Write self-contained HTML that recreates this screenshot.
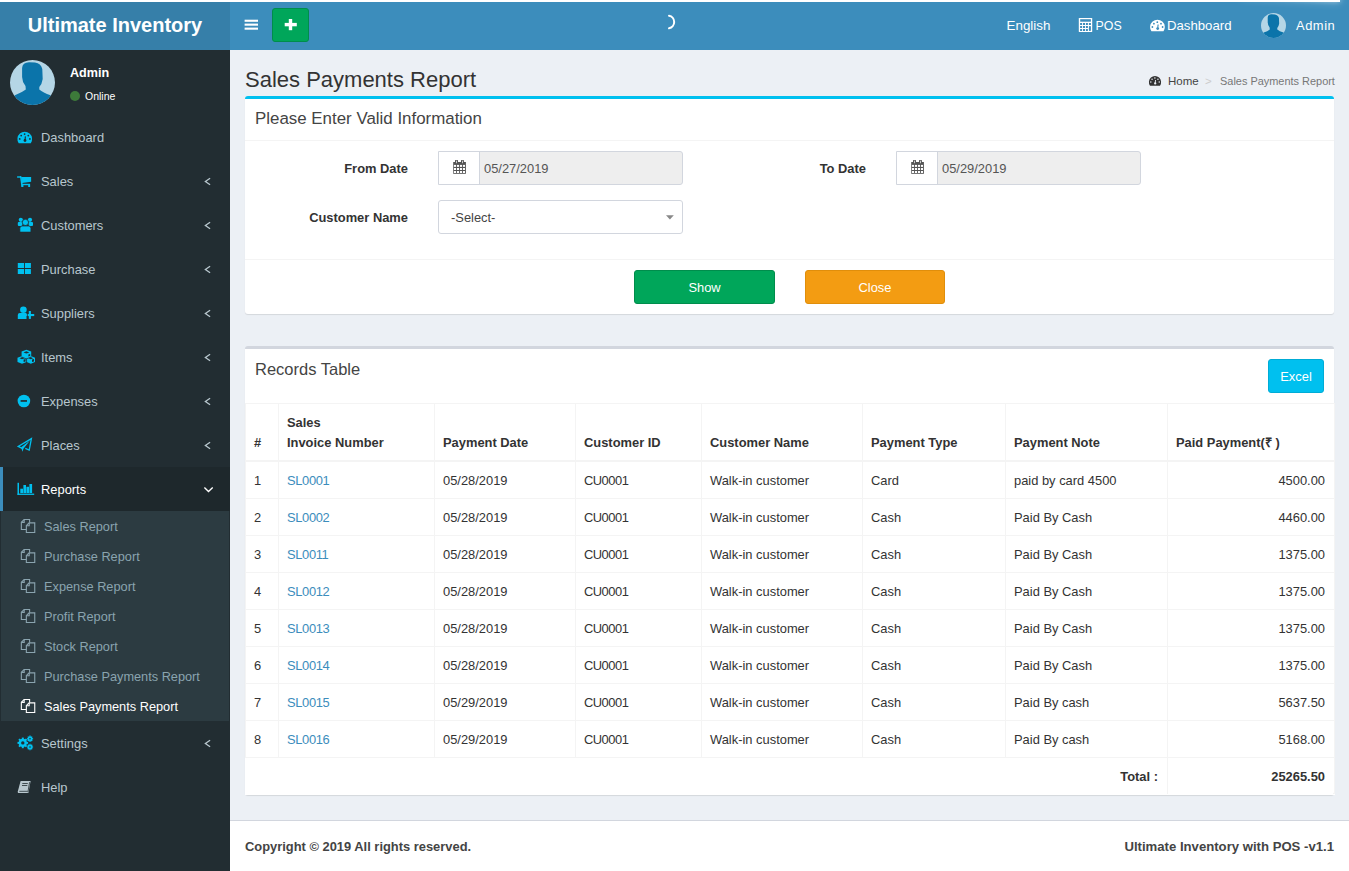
<!DOCTYPE html>
<html>
<head>
<meta charset="utf-8">
<style>
*{box-sizing:border-box;margin:0;padding:0}
html,body{width:1349px;height:871px;overflow:hidden}
body{font-family:"Liberation Sans",sans-serif;font-size:12.9px;color:#333;background:#ecf0f5;position:relative}
.abs{position:absolute}
.nowrap{white-space:nowrap}
/* header */
#logo{position:absolute;left:0;top:0;width:230px;height:50px;background:#367fa9;color:#fff;font-weight:bold;font-size:20px;line-height:50px;text-align:center}
#navbar{position:absolute;left:230px;top:0;width:1119px;height:50px;background:#3c8dbc}
#pace{position:absolute;left:0;top:0;width:1340px;height:2px;background:#fff;z-index:10}
.navtxt{position:absolute;color:#fff;font-size:12.9px;line-height:16px;top:18px;white-space:nowrap}
/* sidebar */
#sidebar{position:absolute;left:0;top:50px;width:230px;height:821px;background:#222d32}
.mi{position:absolute;left:0;width:230px;height:44px;color:#b8c7ce;font-size:12.9px}
.mi .t{position:absolute;left:41px;top:15px;line-height:16px;white-space:nowrap}
.mi svg.ic{position:absolute;left:17px;top:15px}
.mi .ang{position:absolute;left:203px;top:16px}
.si{position:absolute;left:1px;width:228px;height:30px;color:#8aa4af;font-size:12.75px}
.si .t{position:absolute;left:43px;top:8px;line-height:16px;white-space:nowrap}
.si svg{position:absolute;left:20px;top:8px}
/* content */
.box{position:absolute;background:#fff;border-radius:3px;box-shadow:0 1px 1px rgba(0,0,0,.1)}
.lbl{position:absolute;font-weight:bold;text-align:right;width:200px;line-height:16px;color:#333;white-space:nowrap}
.ig{position:absolute;height:34px;border:1px solid #d2d6de;border-radius:0 3px 3px 0;background:#eee}
.ig .addon{position:absolute;left:0;top:0;width:41px;height:32px;background:#fff;border-right:1px solid #d2d6de;border-radius:0}
.ig .val{position:absolute;left:45px;top:9px;line-height:16px;color:#555}
.btn{position:absolute;color:#fff;text-align:center;line-height:33.5px;border-radius:3px;font-size:12.9px}
table{border-collapse:collapse;position:absolute;table-layout:fixed}
td,th{border:1px solid #f4f4f4;padding:0 8px;vertical-align:middle;text-align:left;white-space:nowrap;line-height:20px}
th{font-weight:bold;padding:9px 8px 7px;line-height:20px;border-bottom:2px solid #f4f4f4}
td{padding:9px 8px 7px}
.r{text-align:right;padding-right:9px}
.b{font-weight:bold}
a{color:#3c8dbc;text-decoration:none;letter-spacing:-0.35px}
#footer{position:absolute;left:230px;top:820px;width:1119px;height:51px;background:#fff;border-top:1px solid #d2d6de;font-weight:bold;color:#444}
</style>
</head>
<body>
<div id="pace"><div style="position:absolute;right:0;top:0;width:100px;height:100%;box-shadow:0 0 10px #fff,0 0 5px #fff;transform:rotate(3deg) translate(0px,-4px)"></div></div>
<div id="logo">Ultimate Inventory</div>
<div id="navbar">
  <!-- hamburger -->
  <svg class="abs" style="left:14px;top:18px" width="15" height="14" viewBox="0 0 15 14"><rect x="0.6" y="1.7" width="13.4" height="2.1" fill="#fff"/><rect x="0.6" y="5.6" width="13.4" height="2.1" fill="#fff"/><rect x="0.6" y="9.6" width="13.4" height="2.1" fill="#fff"/></svg>
  <!-- green button -->
  <div class="abs" style="left:42px;top:8px;width:37px;height:34px;background:#00a65a;border:1px solid #008d4c;border-radius:3px"></div>
  <svg class="abs" style="left:54px;top:18px" width="14" height="14" viewBox="0 0 14 14"><rect x="4.8" y="1" width="3.4" height="11.2" fill="#fff"/><rect x="0.7" y="4.9" width="12.1" height="3.4" fill="#fff"/></svg>
  <!-- spinner -->
  <svg class="abs" style="left:431px;top:12px" width="20" height="20" viewBox="0 0 20 20"><path d="M8 3.8 A6.3 6.3 0 0 1 8 16.2" stroke="#fff" stroke-width="2" fill="none" stroke-linecap="round"/></svg>
  <div class="navtxt" style="left:776.5px;font-size:13.4px">English</div>
  <svg class="abs" style="left:848px;top:17px" width="15" height="16" viewBox="0 0 15 16"><rect x="0.8" y="0.9" width="13.4" height="14.2" rx="0.6" fill="#fff"/><g fill="#3c8dbc"><rect x="2.2" y="2.2" width="10.7" height="2.5"/><rect x="2.1" y="6" width="2" height="2"/><rect x="5" y="6" width="2" height="2"/><rect x="7.9" y="6" width="2" height="2"/><rect x="10.9" y="6" width="2" height="2"/><rect x="2.1" y="9" width="2" height="2"/><rect x="5" y="9" width="2" height="2"/><rect x="7.9" y="9" width="2" height="2"/><rect x="10.9" y="9" width="2" height="5" rx="0.8"/><rect x="2.1" y="12" width="2" height="2"/><rect x="5" y="12" width="2" height="2"/><rect x="7.9" y="12" width="2" height="2"/></g></svg>
  <div class="navtxt" style="left:865.5px;font-size:12.4px">POS</div>
  <svg class="abs" style="left:920px;top:19px" width="16" height="13" viewBox="0 0 16 13"><g transform="translate(0.1,0.9)"><path d="M1.32 11.4 A7.35 7.35 0 1 1 13.38 11.4 Z" fill="#fff"/><g fill="#3c8dbc"><circle cx="7.2" cy="2.3" r="0.9"/><circle cx="3.8" cy="3.8" r="0.9"/><circle cx="10.9" cy="3.8" r="0.9"/><circle cx="2.3" cy="7.1" r="0.9"/><circle cx="12.5" cy="7.1" r="0.9"/><circle cx="7.6" cy="8.7" r="1.4"/></g><path d="M7.6 8.7 L8 4.6" stroke="#3c8dbc" stroke-width="1.1"/></g></svg>
  <div class="navtxt" style="left:937px;font-size:13.2px">Dashboard</div>
  <svg class="abs" style="left:1031px;top:13px" width="25" height="25" viewBox="0 0 45 45"><defs><clipPath id="cp1"><circle cx="22.5" cy="22.5" r="22.5"/></clipPath></defs><circle cx="22.5" cy="22.5" r="22.5" fill="#b5d6e6"/><g clip-path="url(#cp1)" fill="#0b74aa"><path d="M12.1 8 Q12.5 2.5 19 2.3 L25 2.6 Q31 3.5 32.3 9 L32.7 19 Q32 24 29.3 27 L29.3 29.5 Q33 32.5 40.5 35.3 L45 45 L0 45 L4.9 35.3 Q12 32.5 15.8 29.5 L15.5 26 Q12.2 22 12.1 17 Z"/></g></svg>
  <div class="navtxt" style="left:1066px;letter-spacing:0.55px">Admin</div>
</div>

<div id="sidebar">
  <!-- user panel -->
  <svg class="abs" style="left:10px;top:10px" width="45" height="45" viewBox="0 0 45 45"><defs><clipPath id="cp2"><circle cx="22.5" cy="22.5" r="22.5"/></clipPath></defs><circle cx="22.5" cy="22.5" r="22.5" fill="#b5d6e6"/><g clip-path="url(#cp2)" fill="#0b74aa"><path d="M12.1 8 Q12.5 2.5 19 2.3 L25 2.6 Q31 3.5 32.3 9 L32.7 19 Q32 24 29.3 27 L29.3 29.5 Q33 32.5 40.5 35.3 L45 45 L0 45 L4.9 35.3 Q12 32.5 15.8 29.5 L15.5 26 Q12.2 22 12.1 17 Z"/></g></svg>
  <div class="abs nowrap" style="left:70px;top:15px;color:#fff;font-weight:bold;font-size:12.6px;line-height:16px">Admin</div>
  <div class="abs" style="left:70px;top:41px;width:10px;height:10px;border-radius:50%;background:#3d7a3a"></div>
  <div class="abs nowrap" style="left:85px;top:38px;color:#fff;font-size:10.5px;line-height:16px">Online</div>

  <div class="mi" style="top:65px"><div class="t">Dashboard</div></div>
  <div class="mi" style="top:109px"><div class="t">Sales</div></div>
  <div class="mi" style="top:153px"><div class="t">Customers</div></div>
  <div class="mi" style="top:197px"><div class="t">Purchase</div></div>
  <div class="mi" style="top:241px"><div class="t">Suppliers</div></div>
  <div class="mi" style="top:285px"><div class="t">Items</div></div>
  <div class="mi" style="top:329px"><div class="t">Expenses</div></div>
  <div class="mi" style="top:373px"><div class="t">Places</div></div>
  <div class="mi" style="top:417px;background:#1e282c;color:#fff"><div class="abs" style="left:0;top:0;width:3px;height:44px;background:#3c8dbc"></div><div class="t">Reports</div></div>
  <div class="abs" style="left:1px;top:461px;width:228px;height:210px;background:#2c3b41"></div>
  <div class="si" style="top:461px"><div class="t">Sales Report</div></div>
  <div class="si" style="top:491px"><div class="t">Purchase Report</div></div>
  <div class="si" style="top:521px"><div class="t">Expense Report</div></div>
  <div class="si" style="top:551px"><div class="t">Profit Report</div></div>
  <div class="si" style="top:581px"><div class="t">Stock Report</div></div>
  <div class="si" style="top:611px"><div class="t">Purchase Payments Report</div></div>
  <div class="si" style="top:641px;color:#fff"><div class="t">Sales Payments Report</div></div>
  <div class="mi" style="top:671px"><div class="t">Settings</div></div>
  <div class="mi" style="top:715px"><div class="t">Help</div></div>
</div>

<svg class="abs" style="left:0;top:0;z-index:5" width="230" height="871" viewBox="0 0 230 871">
  <!-- dashboard -->
  <path d="M18.7 143.2 A7.35 7.35 0 1 1 30.8 143.2 Z" fill="#00c0ef"/>
  <g fill="#222d32"><circle cx="24.6" cy="134.1" r="0.9"/><circle cx="21.2" cy="135.6" r="0.9"/><circle cx="28.3" cy="135.6" r="0.9"/><circle cx="19.7" cy="138.9" r="0.9"/><circle cx="29.9" cy="138.9" r="0.9"/><circle cx="25" cy="140.5" r="1.4"/></g>
  <path d="M25 140.5 L25.4 136.4" stroke="#222d32" stroke-width="1.1"/>
  <!-- cart -->
  <g fill="#00c0ef"><rect x="17.1" y="176.3" width="3.9" height="1.4"/><path d="M19.9 176.3 L21.4 176.3 L23.1 187 L21.5 187 Z"/><path d="M21.1 176.9 L31.1 176.9 L31.1 181.8 L22 182.9 Z"/><rect x="21.5" y="183.8" width="8.6" height="1.4"/><rect x="21.5" y="185" width="1.9" height="2"/><rect x="28.2" y="185" width="1.9" height="2"/></g>
  <!-- users -->
  <g fill="#00c0ef"><circle cx="20.8" cy="219.8" r="2.1"/><circle cx="30" cy="219.8" r="2.1"/><rect x="17.8" y="222.1" width="4.6" height="3.9" rx="1"/><rect x="28.6" y="222.1" width="4.4" height="3.9" rx="1"/></g>
  <g fill="#00c0ef" stroke="#222d32" stroke-width="0.7"><circle cx="25.4" cy="222.4" r="3.1"/><path d="M19.9 232.1 L19.9 228.2 Q19.9 226 22 226 L28.8 226 Q30.9 226 30.9 228.2 L30.9 232.1 Z"/></g>
  <!-- th-large -->
  <g fill="#00c0ef"><rect x="17.8" y="263" width="6.2" height="5"/><rect x="24.9" y="263" width="6" height="5"/><rect x="17.8" y="269" width="6.2" height="5"/><rect x="24.9" y="269" width="6" height="5"/></g>
  <!-- user-plus -->
  <g fill="#00c0ef"><circle cx="23.4" cy="309.7" r="3.3"/><path d="M17.8 318.9 L17.8 315.1 Q17.8 313.1 19.8 313.1 L26.5 313.1 L26.5 318.9 Z"/><rect x="28.8" y="311" width="2.1" height="7.9"/><rect x="25.6" y="314" width="8.6" height="2.1"/></g>
  <path d="M27.4 313 L27.4 317" stroke="#222d32" stroke-width="0.8"/>
  <!-- cubes -->
  <g fill="#00c0ef"><path d="M26.4 349.8 L31.2 351.6 L31.2 357 L26.4 358.8 L21.6 357 L21.6 351.6 Z"/><path d="M22 356 L26.6 357.8 L26.6 362 L22 363.8 L17.5 362 L17.5 357.8 Z"/><path d="M30.8 356 L35 357.8 L35 362 L30.8 363.8 L26.6 362 L26.6 357.8 Z"/></g>
  <g fill="#222d32"><path d="M26.4 351.3 L29.3 352.4 L26.4 353.4 L23.5 352.4 Z"/><path d="M22 357.3 L24.6 358.3 L22 359.2 L19.4 358.3 Z"/><path d="M30.8 357.3 L33.2 358.3 L30.8 359.2 L28.4 358.3 Z"/></g>
  <g stroke="#222d32" stroke-width="0.7" fill="none"><path d="M21.4 356.9 L26.4 358.9 L31.4 356.9"/><path d="M26.6 358.6 L26.6 364"/></g><g fill="#222d32"><path d="M23.6 359.6 L25.6 359 L25.6 361.4 L23.6 362 Z"/><path d="M32 359.6 L34 359 L34 361.4 L32 362 Z"/><path d="M28.4 354.5 L30.2 353.9 L30.2 355.8 L28.4 356.4 Z"/></g>
  <!-- minus-circle -->
  <circle cx="23.9" cy="401" r="6.3" fill="#00c0ef"/><rect x="20.6" y="400.1" width="6.4" height="1.7" fill="#222d32"/>
  <!-- paper-plane-o -->
  <path d="M22.2 448.4 L18.2 446.4 L31.4 438.6 L29.2 450 L25.3 448.4" stroke="#00c0ef" stroke-width="1.3" fill="none" stroke-linejoin="miter"/>
  <path d="M21.2 447.2 L30 440.5 L23.6 448.4 L22.4 451.8 Z" fill="#00c0ef"/>
  <!-- bar chart -->
  <g fill="#00c0ef"><rect x="17.5" y="482.8" width="1.5" height="12.1"/><rect x="17.5" y="493.6" width="16.7" height="1.3"/><rect x="20.3" y="488.7" width="2.7" height="4.3"/><rect x="23.4" y="485" width="2.6" height="8"/><rect x="26.4" y="486.8" width="2.6" height="6.2"/><rect x="29.4" y="484" width="2.7" height="9"/></g>
  <!-- cogs -->
  <g fill="#00c0ef">
    <circle cx="22.8" cy="742.9" r="4.2"/>
    <g stroke="#00c0ef" stroke-width="2"><path d="M22.8 737.6 L22.8 748.2"/><path d="M17.5 742.9 L28.1 742.9"/><path d="M19.05 739.15 L26.55 746.65"/><path d="M26.55 739.15 L19.05 746.65"/></g>
    <circle cx="30" cy="738.8" r="2.3"/><g stroke="#00c0ef" stroke-width="1.3"><path d="M30 735.6 L30 742"/><path d="M26.9 738.8 L33.1 738.8"/><path d="M27.8 736.6 L32.2 741"/><path d="M32.2 736.6 L27.8 741"/></g>
    <circle cx="30" cy="747" r="2.3"/><g stroke="#00c0ef" stroke-width="1.3"><path d="M30 743.8 L30 750.2"/><path d="M26.9 747 L33.1 747"/><path d="M27.8 744.8 L32.2 749.2"/><path d="M32.2 744.8 L27.8 749.2"/></g>
  </g>
  <g fill="#222d32"><circle cx="22.8" cy="742.9" r="1.7"/><circle cx="30" cy="738.8" r="0.8"/><circle cx="30" cy="747" r="0.8"/></g>
  <!-- book -->
  <path d="M20.6 781 L30.6 781 L28.4 792.9 L18.2 792.9 Q17.6 792.6 17.8 791.5 Z" fill="#b8c7ce"/>
  <g stroke="#222d32" stroke-width="0.8"><path d="M22.3 783.5 L27.8 783.5"/><path d="M22 785.5 L27.3 785.5"/><path d="M19.3 791.3 L27.6 791.3"/></g>
  <path d="M29.6 782.2 L27.9 792.2" stroke="#222d32" stroke-width="0.8"/>
  <!-- angles -->
  <path d="M210.1 178.3 L205.4 181.5 L210.1 184.7" stroke="#b8c7ce" stroke-width="1.3" fill="none"/><path d="M210.1 222.3 L205.4 225.5 L210.1 228.7" stroke="#b8c7ce" stroke-width="1.3" fill="none"/><path d="M210.1 266.3 L205.4 269.5 L210.1 272.7" stroke="#b8c7ce" stroke-width="1.3" fill="none"/><path d="M210.1 310.3 L205.4 313.5 L210.1 316.7" stroke="#b8c7ce" stroke-width="1.3" fill="none"/><path d="M210.1 354.3 L205.4 357.5 L210.1 360.7" stroke="#b8c7ce" stroke-width="1.3" fill="none"/><path d="M210.1 398.3 L205.4 401.5 L210.1 404.7" stroke="#b8c7ce" stroke-width="1.3" fill="none"/><path d="M210.1 442.3 L205.4 445.5 L210.1 448.7" stroke="#b8c7ce" stroke-width="1.3" fill="none"/><path d="M210.1 740.3 L205.4 743.5 L210.1 746.7" stroke="#b8c7ce" stroke-width="1.3" fill="none"/>
  <path d="M204.4 487.6 L208.5 491.5 L212.7 487.6" stroke="#fff" stroke-width="1.4" fill="none"/>
  <g stroke="#8aa4af" stroke-width="1.1" fill="none" transform="translate(20.8,519)">
    <path d="M5.3 10.5 L0.55 10.5 L0.55 3.3 L3.3 0.55 L8.8 0.55 L8.8 3.6"/><path d="M0.8 3.4 L3.4 3.4 L3.4 0.8"/>
    <path d="M5.55 6.6 L8.3 3.85 L13.95 3.85 L13.95 13.5 L5.55 13.5 Z"/><path d="M5.8 6.7 L8.4 6.7 L8.4 4.1"/>
  </g>
  <g stroke="#8aa4af" stroke-width="1.1" fill="none" transform="translate(20.8,549)">
    <path d="M5.3 10.5 L0.55 10.5 L0.55 3.3 L3.3 0.55 L8.8 0.55 L8.8 3.6"/><path d="M0.8 3.4 L3.4 3.4 L3.4 0.8"/>
    <path d="M5.55 6.6 L8.3 3.85 L13.95 3.85 L13.95 13.5 L5.55 13.5 Z"/><path d="M5.8 6.7 L8.4 6.7 L8.4 4.1"/>
  </g>
  <g stroke="#8aa4af" stroke-width="1.1" fill="none" transform="translate(20.8,579)">
    <path d="M5.3 10.5 L0.55 10.5 L0.55 3.3 L3.3 0.55 L8.8 0.55 L8.8 3.6"/><path d="M0.8 3.4 L3.4 3.4 L3.4 0.8"/>
    <path d="M5.55 6.6 L8.3 3.85 L13.95 3.85 L13.95 13.5 L5.55 13.5 Z"/><path d="M5.8 6.7 L8.4 6.7 L8.4 4.1"/>
  </g>
  <g stroke="#8aa4af" stroke-width="1.1" fill="none" transform="translate(20.8,609)">
    <path d="M5.3 10.5 L0.55 10.5 L0.55 3.3 L3.3 0.55 L8.8 0.55 L8.8 3.6"/><path d="M0.8 3.4 L3.4 3.4 L3.4 0.8"/>
    <path d="M5.55 6.6 L8.3 3.85 L13.95 3.85 L13.95 13.5 L5.55 13.5 Z"/><path d="M5.8 6.7 L8.4 6.7 L8.4 4.1"/>
  </g>
  <g stroke="#8aa4af" stroke-width="1.1" fill="none" transform="translate(20.8,639)">
    <path d="M5.3 10.5 L0.55 10.5 L0.55 3.3 L3.3 0.55 L8.8 0.55 L8.8 3.6"/><path d="M0.8 3.4 L3.4 3.4 L3.4 0.8"/>
    <path d="M5.55 6.6 L8.3 3.85 L13.95 3.85 L13.95 13.5 L5.55 13.5 Z"/><path d="M5.8 6.7 L8.4 6.7 L8.4 4.1"/>
  </g>
  <g stroke="#8aa4af" stroke-width="1.1" fill="none" transform="translate(20.8,669)">
    <path d="M5.3 10.5 L0.55 10.5 L0.55 3.3 L3.3 0.55 L8.8 0.55 L8.8 3.6"/><path d="M0.8 3.4 L3.4 3.4 L3.4 0.8"/>
    <path d="M5.55 6.6 L8.3 3.85 L13.95 3.85 L13.95 13.5 L5.55 13.5 Z"/><path d="M5.8 6.7 L8.4 6.7 L8.4 4.1"/>
  </g>
  <g stroke="#fff" stroke-width="1.1" fill="none" transform="translate(20.8,699)">
    <path d="M5.3 10.5 L0.55 10.5 L0.55 3.3 L3.3 0.55 L8.8 0.55 L8.8 3.6"/><path d="M0.8 3.4 L3.4 3.4 L3.4 0.8"/>
    <path d="M5.55 6.6 L8.3 3.85 L13.95 3.85 L13.95 13.5 L5.55 13.5 Z"/><path d="M5.8 6.7 L8.4 6.7 L8.4 4.1"/>
  </g>
</svg>
<!-- content header -->
<div class="abs nowrap" style="left:245px;top:67.5px;font-size:22px;line-height:24px;color:#333">Sales Payments Report</div>
<div class="abs nowrap" style="left:1168px;top:73px;font-size:11.5px;line-height:16px;color:#444">Home</div>
<div class="abs nowrap" style="left:1205px;top:73px;font-size:11.5px;line-height:16px;color:#ccc">&gt;</div>
<div class="abs nowrap" style="left:1220px;top:73px;font-size:10.95px;line-height:16px;color:#777">Sales Payments Report</div>

<!-- box 1 -->
<div class="box" style="left:245px;top:96px;width:1089px;height:218px;border-top:3px solid #00c0ef">
  <div class="abs nowrap" style="left:10px;top:10px;font-size:16.9px;line-height:20px;color:#444">Please Enter Valid Information</div>
  <div class="abs" style="left:0;top:41px;width:1089px;height:1px;background:#f4f4f4"></div>
  <div class="lbl" style="left:-37px;top:62px">From Date</div>
  <div class="ig" style="left:193px;top:52px;width:245px"><div class="addon"></div><div class="val">05/27/2019</div></div>
  <div class="lbl" style="left:421px;top:62px">To Date</div>
  <div class="ig" style="left:651px;top:52px;width:245px"><div class="addon"></div><div class="val">05/29/2019</div></div>
  <div class="lbl" style="left:-37px;top:111px">Customer Name</div>
  <div class="abs" style="left:193px;top:101px;width:245px;height:34px;border:1px solid #d2d6de;border-radius:3px;background:#fff"><div class="abs nowrap" style="left:12px;top:9px;line-height:16px;color:#444">-Select-</div></div>
  <div class="abs" style="left:0;top:160px;width:1089px;height:1px;background:#f4f4f4"></div>
  <div class="btn" style="left:389px;top:171px;width:141px;height:34px;background:#00a65a;border:1px solid #008d4c">Show</div>
  <div class="btn" style="left:560px;top:171px;width:140px;height:34px;background:#f39c12;border:1px solid #e08e0b">Close</div>
</div>

<!-- box 2 -->
<div class="box" style="left:245px;top:346px;width:1089px;height:449px;border-top:3px solid #d2d6de">
  <div class="abs nowrap" style="left:10px;top:9.5px;font-size:16.5px;line-height:20px;color:#444">Records Table</div>
  <div class="btn" style="left:1023px;top:10px;width:56px;height:34px;background:#00c0ef;border:1px solid #00acd6">Excel</div>
  <table id="tbl" style="left:0;top:54px;width:1089px">
    <colgroup><col style="width:33px"><col style="width:156px"><col style="width:141px"><col style="width:126px"><col style="width:161px"><col style="width:143px"><col style="width:162px"><col style="width:167px"></colgroup>
    <thead><tr class="hr"><th style="vertical-align:bottom">#</th><th>Sales<br>Invoice Number</th><th style="vertical-align:bottom">Payment Date</th><th style="vertical-align:bottom">Customer ID</th><th style="vertical-align:bottom">Customer Name</th><th style="vertical-align:bottom">Payment Type</th><th style="vertical-align:bottom">Payment Note</th><th style="vertical-align:bottom">Paid Payment(&#8377; )</th></tr></thead>
    <tbody>
    <tr><td>1</td><td><a>SL0001</a></td><td>05/28/2019</td><td style="letter-spacing:-0.5px">CU0001</td><td>Walk-in customer</td><td>Card</td><td>paid by card 4500</td><td class="r">4500.00</td></tr>
    <tr><td>2</td><td><a>SL0002</a></td><td>05/28/2019</td><td style="letter-spacing:-0.5px">CU0001</td><td>Walk-in customer</td><td>Cash</td><td>Paid By Cash</td><td class="r">4460.00</td></tr>
    <tr><td>3</td><td><a>SL0011</a></td><td>05/28/2019</td><td style="letter-spacing:-0.5px">CU0001</td><td>Walk-in customer</td><td>Cash</td><td>Paid By Cash</td><td class="r">1375.00</td></tr>
    <tr><td>4</td><td><a>SL0012</a></td><td>05/28/2019</td><td style="letter-spacing:-0.5px">CU0001</td><td>Walk-in customer</td><td>Cash</td><td>Paid By Cash</td><td class="r">1375.00</td></tr>
    <tr><td>5</td><td><a>SL0013</a></td><td>05/28/2019</td><td style="letter-spacing:-0.5px">CU0001</td><td>Walk-in customer</td><td>Cash</td><td>Paid By Cash</td><td class="r">1375.00</td></tr>
    <tr><td>6</td><td><a>SL0014</a></td><td>05/28/2019</td><td style="letter-spacing:-0.5px">CU0001</td><td>Walk-in customer</td><td>Cash</td><td>Paid By Cash</td><td class="r">1375.00</td></tr>
    <tr><td>7</td><td><a>SL0015</a></td><td>05/29/2019</td><td style="letter-spacing:-0.5px">CU0001</td><td>Walk-in customer</td><td>Cash</td><td>Paid By cash</td><td class="r">5637.50</td></tr>
    <tr><td>8</td><td><a>SL0016</a></td><td>05/29/2019</td><td style="letter-spacing:-0.5px">CU0001</td><td>Walk-in customer</td><td>Cash</td><td>Paid By cash</td><td class="r">5168.00</td></tr>
    <tr class="tot"><td colspan="7" class="r b" style="border-left-color:#fff;border-bottom-color:#fff">Total :</td><td class="r b" style="border-bottom-color:#fff">25265.50</td></tr>
    </tbody>
  </table>
</div>

<svg class="abs" style="left:0;top:0;z-index:6;pointer-events:none" width="1349" height="871" viewBox="0 0 1349 871"><g transform="translate(453.2,162)" fill="#555"><rect x="0" y="0" width="12.7" height="11.8"/><rect x="1.8" y="-1.9" width="3" height="3"/><rect x="7.8" y="-1.9" width="2.9" height="3"/></g><g transform="translate(453.2,162)" fill="#fff"><rect x="0.7" y="2.9" width="2.1" height="2"/><rect x="3.7" y="2.9" width="2.1" height="2"/><rect x="6.7" y="2.9" width="2.1" height="2"/><rect x="9.7" y="2.9" width="2.1" height="2"/><rect x="0.7" y="6.0" width="2.1" height="2"/><rect x="3.7" y="6.0" width="2.1" height="2"/><rect x="6.7" y="6.0" width="2.1" height="2"/><rect x="9.7" y="6.0" width="2.1" height="2"/><rect x="0.7" y="9.0" width="2.1" height="2"/><rect x="3.7" y="9.0" width="2.1" height="2"/><rect x="6.7" y="9.0" width="2.1" height="2"/><rect x="9.7" y="9.0" width="2.1" height="2"/><rect x="2.9" y="-1.2" width="0.7" height="2.4"/><rect x="8.9" y="-1.2" width="0.7" height="2.4"/></g><g transform="translate(911.2,162)" fill="#555"><rect x="0" y="0" width="12.7" height="11.8"/><rect x="1.8" y="-1.9" width="3" height="3"/><rect x="7.8" y="-1.9" width="2.9" height="3"/></g><g transform="translate(911.2,162)" fill="#fff"><rect x="0.7" y="2.9" width="2.1" height="2"/><rect x="3.7" y="2.9" width="2.1" height="2"/><rect x="6.7" y="2.9" width="2.1" height="2"/><rect x="9.7" y="2.9" width="2.1" height="2"/><rect x="0.7" y="6.0" width="2.1" height="2"/><rect x="3.7" y="6.0" width="2.1" height="2"/><rect x="6.7" y="6.0" width="2.1" height="2"/><rect x="9.7" y="6.0" width="2.1" height="2"/><rect x="0.7" y="9.0" width="2.1" height="2"/><rect x="3.7" y="9.0" width="2.1" height="2"/><rect x="6.7" y="9.0" width="2.1" height="2"/><rect x="9.7" y="9.0" width="2.1" height="2"/><rect x="2.9" y="-1.2" width="0.7" height="2.4"/><rect x="8.9" y="-1.2" width="0.7" height="2.4"/></g><path d="M666 215.2 L673.8 215.2 L669.9 219.6 Z" fill="#888"/><g transform="translate(1148.9,76.2) scale(0.83)"><path d="M1.32 11.4 A7.35 7.35 0 1 1 13.38 11.4 Z" fill="#333"/><g fill="#ecf0f5"><circle cx="7.2" cy="2.3" r="0.9"/><circle cx="3.8" cy="3.8" r="0.9"/><circle cx="10.9" cy="3.8" r="0.9"/><circle cx="2.3" cy="7.1" r="0.9"/><circle cx="12.5" cy="7.1" r="0.9"/><circle cx="7.6" cy="8.7" r="1.4"/></g><path d="M7.6 8.7 L8 4.6" stroke="#ecf0f5" stroke-width="1.1"/></g></svg>
<div id="footer">
  <div class="abs nowrap" style="left:15px;top:18px;font-size:12.9px;line-height:16px">Copyright © 2019 All rights reserved.</div>
  <div class="abs nowrap" style="right:15px;top:18px;font-size:13.15px;line-height:16px">Ultimate Inventory with POS -v1.1</div>
</div>
</body>
</html>
